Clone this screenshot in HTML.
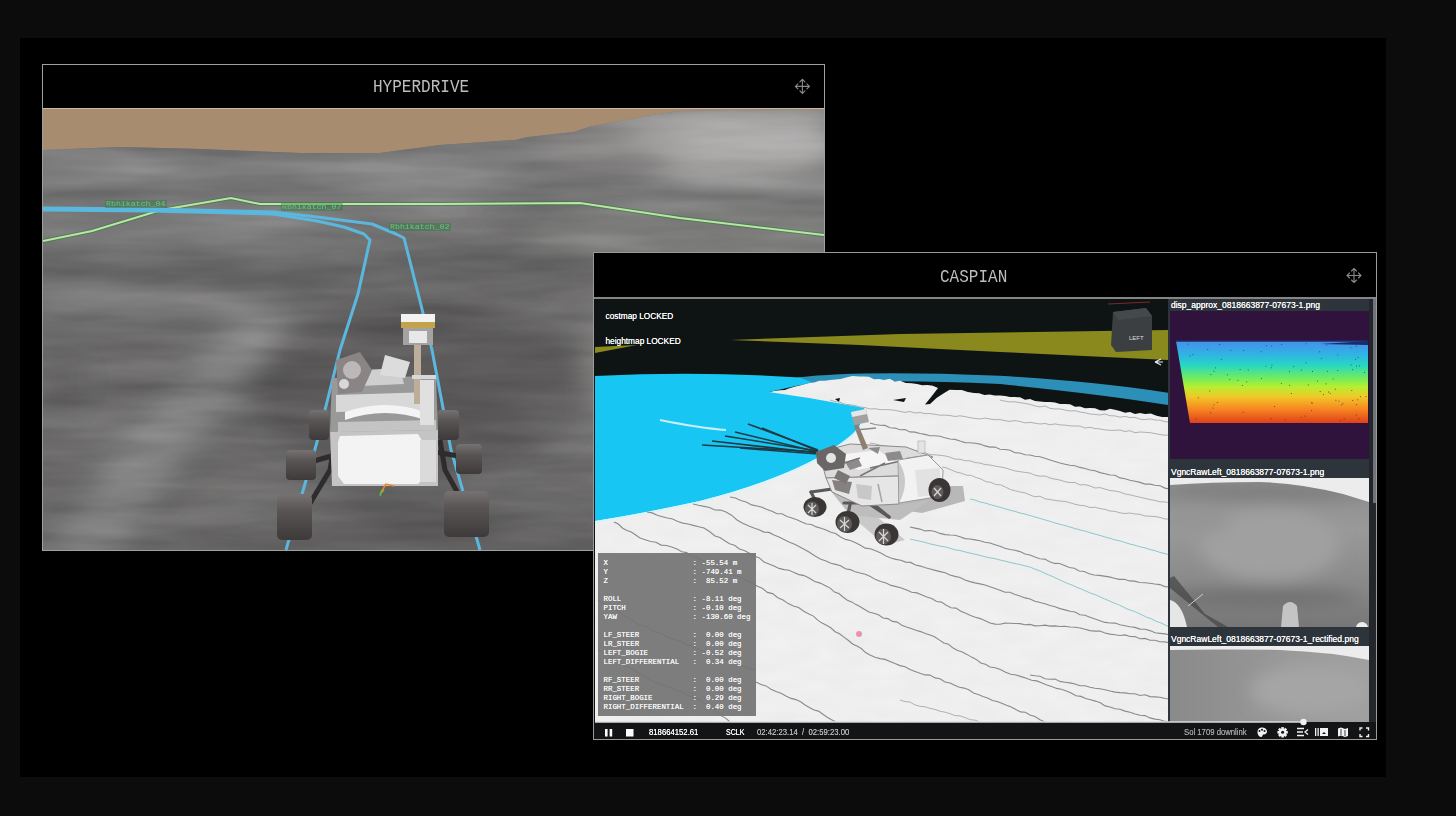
<!DOCTYPE html>
<html><head><meta charset="utf-8">
<style>
html,body{margin:0;padding:0}
body{width:1456px;height:816px;background:#0c0c0c;overflow:hidden;position:relative;font-family:"Liberation Sans",sans-serif}
.abs{position:absolute}
svg{position:absolute;left:0;top:0}
.title{position:absolute;font-family:"Liberation Mono",monospace;font-size:18px;color:#bdbdbd;line-height:18px;transform:scaleX(0.89);transform-origin:0 0;white-space:nowrap}
.mono{font-family:"Liberation Mono",monospace}
.glbl{font-size:8px;line-height:8px;height:8px;padding:0 1px;color:#67c57e;background:rgba(40,120,60,0.4);transform:scaleX(1.03);transform-origin:0 0;white-space:nowrap}
.lbl{font-size:8.5px;line-height:10px;color:#fff;text-shadow:0 0 0.3px #fff;white-space:nowrap}
.tb{top:727px;font-size:8.9px;line-height:10px;transform:scaleX(0.87);transform-origin:0 0;white-space:nowrap;text-shadow:0 0 0.3px currentColor}
</style></head>
<body>
<div class="abs" style="left:20px;top:38px;width:1366px;height:739px;background:#000"></div>

<!-- WINDOW 1 -->
<svg width="1456" height="816" viewBox="0 0 1456 816">
  <defs>
    <linearGradient id="terr1" x1="0" y1="0" x2="0" y2="1">
      <stop offset="0" stop-color="#7d7b7a"/>
      <stop offset="0.15" stop-color="#8a8988"/>
      <stop offset="0.35" stop-color="#6f6e6e"/>
      <stop offset="0.7" stop-color="#5e5d5d"/>
      <stop offset="1" stop-color="#626161"/>
    </linearGradient>
    <filter id="blur8" x="-50%" y="-50%" width="200%" height="200%"><feGaussianBlur stdDeviation="8"/></filter>
    <filter id="blurT" x="-10%" y="-10%" width="120%" height="120%"><feGaussianBlur stdDeviation="14"/></filter>
    <filter id="streak" x="0" y="0" width="100%" height="100%" color-interpolation-filters="sRGB">
      <feTurbulence type="fractalNoise" baseFrequency="0.006 0.045" numOctaves="3" seed="4" result="n"/>
      <feColorMatrix in="n" type="matrix" values="1.6 0 0 0 -0.3  1.6 0 0 0 -0.3  1.6 0 0 0 -0.3  0 0 0 0 1"/>
    </filter>
    <filter id="blur3" x="-50%" y="-50%" width="200%" height="200%"><feGaussianBlur stdDeviation="3"/></filter>
    <clipPath id="c1"><rect x="43" y="109" width="781" height="441"/></clipPath>
    <clipPath id="t1"><path d="M43 150 L120 147 L200 149 L300 153 L380 153 L440 145 L515 140 L528 137 L574 132 L590 126.5 L627 120 L654 114.5 L681 111 L735 110 L788 109.5 L824 110 L824 550 L43 550 Z"/></clipPath>
  </defs>
  <rect x="42.5" y="64.5" width="782" height="486" fill="#000" stroke="#a0a0a0" stroke-width="1"/>
  <g clip-path="url(#c1)">
    <rect x="43" y="108" width="781" height="442" fill="#a78c6f"/>
    <!-- base terrain -->
    <path d="M43 150 L120 147 L200 149 L300 153 L380 153 L440 145 L515 140 L528 137 L574 132 L590 126.5 L627 120 L654 114.5 L681 111 L735 110 L788 109.5 L824 110 L824 550 L43 550 Z" fill="#777676"/>
    <g clip-path="url(#t1)">
    <g filter="url(#blurT)">
      <rect x="0" y="100" width="900" height="460" fill="#6c6b6b"/>
      <!-- horizon band -->
      <path d="M20 150 L300 156 L440 148 L580 134 L706 104 L860 104 L860 200 L600 198 L300 195 L20 195 Z" fill="#818080"/>
      <!-- mountain highlight -->
      <ellipse cx="740" cy="150" rx="100" ry="30" fill="#a3a2a1"/>
      <path d="M540 142 L627 124 L681 114 L824 112 L824 140 L740 150 L650 150 L560 152 Z" fill="#adacab"/>
      <ellipse cx="610" cy="150" rx="70" ry="14" fill="#949392"/>
      <!-- mid band -->
      <ellipse cx="250" cy="228" rx="260" ry="25" fill="#7a7979"/>
      <ellipse cx="700" cy="235" rx="180" ry="28" fill="#7c7b7a"/>
      <!-- dark band -->
      <ellipse cx="280" cy="268" rx="300" ry="12" fill="#5f5f5f"/>
      <!-- left light streak -->
      <ellipse cx="150" cy="300" rx="140" ry="14" fill="#7e7d7d"/>
      <!-- middle dark -->
      <ellipse cx="420" cy="390" rx="170" ry="90" fill="#5b5a5a"/>
      <!-- lower left light diagonal -->
      <path d="M40 560 L120 450 L200 360 L240 320 L290 320 L230 400 L160 490 L110 560 Z" fill="#838282"/>
      <ellipse cx="60" cy="380" rx="30" ry="40" fill="#626161"/>
      <!-- right light -->
      <ellipse cx="720" cy="360" rx="140" ry="85" fill="#828180"/>
      <!-- bottom mid -->
      <ellipse cx="400" cy="540" rx="220" ry="40" fill="#626161"/>
      <ellipse cx="720" cy="520" rx="130" ry="50" fill="#6a6969"/>
    </g>
    <rect x="43" y="108" width="781" height="442" filter="url(#streak)" opacity="0.13" style="mix-blend-mode:overlay"/>
    </g>
    <!-- path lines -->
    <path d="M43 241 L92 231 L161 210 L231 198 L260 204 L440 204 L580 203 L680 218 L824 235" fill="none" stroke="#2f7a3a" stroke-width="4" opacity="0.55"/>
    <path d="M43 241 L92 231 L161 210 L231 198 L260 204 L440 204 L580 203 L680 218 L824 235" fill="none" stroke="#b9e6a4" stroke-width="2"/>
    <path d="M43 210 L150 211 L273 214 L317 221 L344 227 L364 234 L370 240 L358 294 L340 350 L317 442 L286 550" fill="none" stroke="#5ab8de" stroke-width="3" stroke-linejoin="round"/>
    <path d="M43 208 L150 209 L273 212 L317 217 L372 224 L396 234 L404 238 L421 305 L432 350 L451 450 L480 550" fill="none" stroke="#5ab8de" stroke-width="3" stroke-linejoin="round"/>

    <!-- rover 1 -->
    <g id="rover1">
      <defs>
        <linearGradient id="wh" x1="0" y1="0" x2="0" y2="1">
          <stop offset="0" stop-color="#777272"/><stop offset="0.35" stop-color="#5a5555"/><stop offset="1" stop-color="#3e3a3a"/>
        </linearGradient>
      </defs>
      <!-- far wheels -->
      <rect x="309" y="410" width="20" height="30" rx="4" fill="url(#wh)"/>
      <rect x="437" y="410" width="22" height="30" rx="4" fill="url(#wh)"/>
      <!-- suspension -->
      <path d="M300 520 L330 470 L335 440 M470 515 L445 470 L440 440 M300 465 L335 455 M470 458 L435 452" stroke="#2e2c2c" stroke-width="5" fill="none"/>
      <!-- deck -->
      <path d="M332 378 L436 376 L438 432 L330 432 Z" fill="#9a9999"/>
      <path d="M336 395 L432 392 L434 410 L336 412 Z" fill="#d8d8d8"/>
      <path d="M345 412 Q385 398 425 412 L425 420 Q385 406 345 420 Z" fill="#f4f4f4"/>
      <path d="M338 422 L436 420 L436 430 L338 432 Z" fill="#c4c4c4"/>
      <path d="M364 370 L400 368 L404 384 L360 386 Z" fill="#cfcfcf"/>
      <path d="M385 355 L410 362 L405 378 L380 375 Z" fill="#dcdcdc"/>
      <!-- arm turret -->
      <path d="M336 360 L360 352 L372 370 L362 392 L338 394 Z" fill="#8a8584"/>
      <circle cx="352" cy="370" r="9" fill="#bab8b8"/>
      <circle cx="344" cy="384" r="5" fill="#d8d8d8"/>
      <!-- mast -->
      <rect x="414" y="340" width="7" height="64" fill="#bcae98"/>
      <rect x="412" y="375" width="24" height="4" fill="#d8d8d8"/>
      <rect x="420" y="380" width="14" height="45" fill="#e0e0e0"/>
      <!-- mast head -->
      <rect x="401" y="314" width="34" height="12" fill="#f2f2f0"/>
      <rect x="401" y="322" width="34" height="6" fill="#c2a24a"/>
      <rect x="403" y="328" width="30" height="17" fill="#a5a3a1"/>
      <rect x="409" y="331" width="18" height="12" fill="#e8e8e8"/>
      <!-- front box -->
      <path d="M330 432 L438 430 L438 486 L332 486 Z" fill="#c4c4c4"/>
      <path d="M340 436 L418 434 L424 444 L424 478 L418 484 L344 484 L338 476 L338 442 Z" fill="#f3f3f3"/>
      <rect x="420" y="440" width="16" height="42" fill="#dadada"/>
      <!-- front wheels -->
      <rect x="286" y="450" width="30" height="30" rx="4" fill="url(#wh)"/>
      <rect x="456" y="444" width="26" height="30" rx="4" fill="url(#wh)"/>
      <!-- rear wheels -->
      <rect x="277" y="494" width="35" height="46" rx="5" fill="url(#wh)"/>
      <rect x="444" y="491" width="45" height="46" rx="5" fill="url(#wh)"/>
      <path d="M380 494 L386 484 L394 486 M384 490 L380 494" stroke="#e28a2c" stroke-width="1.5" fill="none"/>
      <path d="M382 490 L380 496" stroke="#4ec04e" stroke-width="1.5"/>
    </g>
  </g>
  <line x1="43" y1="108.5" x2="824" y2="108.5" stroke="#c8b8a4" stroke-width="1"/>
  <g transform="translate(802.4 86.4)" stroke="#8a8a8a" stroke-width="1.1" fill="none" stroke-linecap="round">
    <path d="M0 -7 L0 7 M-7 0 L7 0 M-2.5 -4.5 L0 -7 L2.5 -4.5 M-2.5 4.5 L0 7 L2.5 4.5 M-4.5 -2.5 L-7 0 L-4.5 2.5 M4.5 -2.5 L7 0 L4.5 2.5"/>
  </g>
</svg>
<div class="title" style="left:373px;top:78.3px">HYPERDRIVE</div>
<div class="abs mono glbl" style="left:104.5px;top:199.5px">Rbhikatch_04</div>
<div class="abs mono glbl" style="left:280.5px;top:202.5px">Rbhikatch_07</div>
<div class="abs mono glbl" style="left:388.5px;top:222.5px">Rbhikatch_02</div>


<!-- WINDOW 2 -->
<svg width="1456" height="816" viewBox="0 0 1456 816">
  <defs>
    <filter id="bumps" x="0" y="0" width="100%" height="100%" color-interpolation-filters="sRGB">
      <feTurbulence type="fractalNoise" baseFrequency="0.03 0.08" numOctaves="2" seed="9" result="n"/>
      <feColorMatrix in="n" type="matrix" values="1.4 0 0 0 -0.2  1.4 0 0 0 -0.2  1.4 0 0 0 -0.2  0 0 0 0 1"/>
    </filter>
    <clipPath id="tclip"><path d="M769.0 392.0 L774.2 390.9 L779.5 390.2 L784.8 390.1 L790.0 388.0 L796.3 386.2 L802.7 384.7 L809.0 383.0 L814.2 382.5 L819.5 380.7 L824.8 380.8 L830.0 380.0 L835.3 379.5 L840.7 379.0 L846.0 377.4 L852.5 375.9 L859.0 376.5 L864.0 376.6 L869.0 376.7 L874.0 379.2 L879.0 379.0 L884.2 379.9 L889.5 378.7 L894.8 381.5 L900.0 380.7 L905.7 383.0 L911.3 383.3 L917.0 384.0 L922.2 385.3 L927.5 385.1 L932.8 385.7 L938.0 388.0 L931.5 396.4 L925.0 404.6 L930.0 404.0 L936.5 398.1 L943.0 393.7 L949.5 389.7 L955.6 389.9 L961.8 390.1 L967.9 392.1 L974.0 393.0 L979.2 393.3 L984.4 394.9 L989.6 394.5 L994.8 395.4 L1000.0 395.5 L1005.0 396.1 L1010.0 397.1 L1015.0 397.1 L1020.0 397.3 L1025.0 399.7 L1030.0 399.0 L1035.0 401.1 L1040.0 401.6 L1045.0 402.0 L1050.0 401.9 L1055.0 402.5 L1060.0 404.0 L1065.0 404.1 L1070.0 404.2 L1075.0 406.7 L1080.0 406.4 L1085.0 408.2 L1090.0 408.0 L1095.0 408.2 L1100.0 410.2 L1105.0 410.4 L1110.0 408.7 L1115.0 409.7 L1120.0 411.0 L1125.0 412.7 L1130.0 412.1 L1135.0 414.0 L1140.0 413.1 L1145.0 414.0 L1150.8 413.6 L1156.5 415.8 L1162.2 417.0 L1168.0 417.0 L1168 722 L595 722 L595 395 Z"/></clipPath>
    <clipPath id="c2"><rect x="594" y="299" width="575" height="423"/></clipPath>
  </defs>
  <rect x="593.5" y="252.5" width="783" height="487" fill="#000" stroke="#9a9a9a" stroke-width="1"/>
  <line x1="594" y1="298" x2="1376" y2="298" stroke="#858585" stroke-width="2"/>
  <g transform="translate(1354 275.5)" stroke="#8a8a8a" stroke-width="1.1" fill="none" stroke-linecap="round">
    <path d="M0 -7 L0 7 M-7 0 L7 0 M-2.5 -4.5 L0 -7 L2.5 -4.5 M-2.5 4.5 L0 7 L2.5 4.5 M-4.5 -2.5 L-7 0 L-4.5 2.5 M4.5 -2.5 L7 0 L4.5 2.5"/>
  </g>
  <g clip-path="url(#c2)">
    <rect x="594" y="299" width="575" height="423" fill="#0e1314"/>
    <!-- yellow wedges -->
    <path d="M730 340 L900 334 L1168 330 L1168 360 L1000 352 L860 345 Z" fill="#8a891d"/>
    <path d="M595 347 L637 345 L595 353 Z" fill="#8a891d"/>
    <!-- blue band -->
    <path d="M798 377.4 Q860 370 1000 375.7 Q1100 382 1168 392.7 L1168 405 Q1100 394 1000 384 Q875 378 800 385 Z" fill="#2b8fb8"/>
    <!-- white terrain -->
    <path d="M769.0 392.0 L774.2 390.9 L779.5 390.2 L784.8 390.1 L790.0 388.0 L796.3 386.2 L802.7 384.7 L809.0 383.0 L814.2 382.5 L819.5 380.7 L824.8 380.8 L830.0 380.0 L835.3 379.5 L840.7 379.0 L846.0 377.4 L852.5 375.9 L859.0 376.5 L864.0 376.6 L869.0 376.7 L874.0 379.2 L879.0 379.0 L884.2 379.9 L889.5 378.7 L894.8 381.5 L900.0 380.7 L905.7 383.0 L911.3 383.3 L917.0 384.0 L922.2 385.3 L927.5 385.1 L932.8 385.7 L938.0 388.0 L931.5 396.4 L925.0 404.6 L930.0 404.0 L936.5 398.1 L943.0 393.7 L949.5 389.7 L955.6 389.9 L961.8 390.1 L967.9 392.1 L974.0 393.0 L979.2 393.3 L984.4 394.9 L989.6 394.5 L994.8 395.4 L1000.0 395.5 L1005.0 396.1 L1010.0 397.1 L1015.0 397.1 L1020.0 397.3 L1025.0 399.7 L1030.0 399.0 L1035.0 401.1 L1040.0 401.6 L1045.0 402.0 L1050.0 401.9 L1055.0 402.5 L1060.0 404.0 L1065.0 404.1 L1070.0 404.2 L1075.0 406.7 L1080.0 406.4 L1085.0 408.2 L1090.0 408.0 L1095.0 408.2 L1100.0 410.2 L1105.0 410.4 L1110.0 408.7 L1115.0 409.7 L1120.0 411.0 L1125.0 412.7 L1130.0 412.1 L1135.0 414.0 L1140.0 413.1 L1145.0 414.0 L1150.8 413.6 L1156.5 415.8 L1162.2 417.0 L1168.0 417.0 L1168 722 L595 722 L595 395 Z" fill="#efefef"/>
    <rect x="595" y="370" width="574" height="352" filter="url(#bumps)" clip-path="url(#tclip)" opacity="0.16" style="mix-blend-mode:overlay"/>
    <path d="M835 399 L840 398 L839 402 Z M893 400 L906 398 L904 402 Z M836 406 L841 405 L840 408 Z" fill="#0e1314"/>
    <!-- cyan blob -->
    <path d="M595 376 Q700 371 800 377.5 L812 382.5 L769 392 L809 398 L865 408 Q866 425 845 440 Q800 475 700 501 Q640 514 595 521 Z" fill="#17c6f2"/>
    <path d="M660 420 Q700 428 726 430" stroke="#c8eef8" stroke-width="2" fill="none"/>
    <path d="M595 522 Q640 515 700 502 Q800 476 846 441 Q867 425 865 408" stroke="#d8f4fb" stroke-width="2" fill="none"/>
    
    
    <g class="contours"><path d="M647.0 512.0 L652.1 512.9 L657.2 515.3 L662.4 516.7 L667.5 518.0 L672.6 519.0 L677.8 521.5 L682.9 523.1 L688.0 524.0 L693.3 525.4 L698.7 526.7 L704.0 528.0 L709.5 531.5 L715.0 536.0 L719.9 537.6 L724.8 540.8 L729.6 543.7 L734.5 545.2 L739.4 549.0 L744.2 550.5 L749.1 553.0 L754.0 556.0 L759.0 557.7 L764.0 561.9 L769.0 563.9 L774.0 566.0 L779.0 568.4 L784.0 569.6 L789.0 570.3 L794.0 572.5 L799.0 574.6 L804.0 575.6 L809.0 578.0 L814.7 581.5 L820.3 583.1 L826.0 586.0 L830.2 588.1 L834.5 592.1 L838.8 593.6 L843.0 597.0 L847.3 600.3 L851.7 601.9 L856.0 604.6 L860.3 606.7 L864.7 609.5 L869.0 612.0 L873.7 613.2 L878.4 614.7 L883.1 618.0 L887.8 618.6 L892.5 621.4 L897.2 622.1 L901.8 625.2 L906.5 626.9 L911.2 628.4 L915.9 630.2 L920.6 631.6 L925.3 633.6 L930.0 635.0 L934.6 636.8 L939.2 639.9 L943.8 643.0 L948.5 644.3 L953.1 648.1 L957.7 650.5 L962.3 652.1 L966.9 654.4 L971.5 657.1 L976.2 659.4 L980.8 663.0 L985.4 664.3 L990.0 667.0 L995.2 667.7 L1000.4 669.5 L1005.6 672.2 L1010.8 674.3 L1016.0 675.0 L1021.2 676.6 L1026.4 678.3 L1031.6 680.2 L1036.8 680.9 L1042.0 683.0 L1046.9 684.9 L1051.7 686.5 L1056.6 688.4 L1061.4 689.3 L1066.3 691.0 L1071.1 693.0 L1076.0 695.8 L1080.9 696.4 L1085.7 698.6 L1090.6 699.8 L1095.4 701.1 L1100.3 702.8 L1105.1 705.9 L1110.0 707.0 L1115.0 708.7 L1120.0 709.3 L1125.0 711.1 L1130.0 712.3 L1135.0 714.0 L1140.0 715.3 L1145.0 715.6 L1150.0 717.9 L1155.0 719.1 L1160.0 719.7 L1165.0 721.4 L1170.0 722.0" fill="none" stroke="#888a8c" stroke-width="1.1"/>
<path d="M693.0 504.0 L698.5 505.3 L704.0 506.4 L709.5 507.5 L715.0 510.0 L720.5 510.1 L726.0 512.0 L731.5 515.2 L737.0 520.0 L742.7 523.2 L748.3 525.8 L754.0 528.0 L759.0 529.7 L764.0 532.1 L769.0 532.4 L774.0 535.0 L779.0 537.0 L784.0 539.5 L789.0 542.1 L794.0 544.1 L799.0 546.4 L804.0 549.3 L809.0 552.0 L814.7 555.7 L820.3 558.9 L826.0 561.0 L830.9 563.2 L835.7 564.4 L840.6 565.7 L845.4 568.7 L850.3 569.6 L855.1 571.7 L860.0 573.0 L865.2 574.2 L870.4 576.5 L875.6 579.6 L880.8 581.5 L886.0 583.0 L891.1 585.4 L896.3 586.6 L901.4 588.0 L906.6 590.0 L911.7 592.2 L916.9 592.9 L922.0 595.0 L926.9 597.1 L931.7 598.6 L936.6 601.5 L941.4 602.1 L946.3 605.3 L951.1 607.8 L956.0 608.1 L960.9 611.2 L965.7 613.3 L970.6 615.6 L975.4 617.2 L980.3 618.6 L985.1 620.8 L990.0 623.0 L995.0 624.1 L1000.0 624.2 L1005.0 623.1 L1010.0 623.3 L1015.0 623.5 L1020.0 623.6 L1025.0 624.7 L1030.0 624.4 L1035.0 625.9 L1040.0 625.8 L1045.0 625.1 L1050.0 626.1 L1055.0 625.9 L1060.0 626.5 L1065.0 626.2 L1070.0 627.0 L1075.0 627.2 L1080.0 628.0 L1085.0 629.2 L1090.0 630.6 L1095.0 631.1 L1100.0 631.0 L1105.0 633.0 L1110.0 634.1 L1115.0 634.7 L1120.0 635.5 L1125.0 634.9 L1130.0 636.5 L1135.0 636.6 L1140.0 638.7 L1145.0 638.4 L1150.0 640.2 L1155.0 640.2 L1160.0 641.8 L1165.0 641.9 L1170.0 643.0" fill="none" stroke="#888a8c" stroke-width="1.1"/>
<path d="M730.0 497.0 L735.4 498.0 L740.8 500.4 L746.2 502.1 L751.6 504.9 L757.0 506.0 L762.0 507.3 L767.0 509.4 L772.0 511.2 L777.0 513.7 L782.0 513.8 L787.0 516.5 L792.0 518.0 L796.9 519.7 L801.7 521.9 L806.6 524.0 L811.4 524.5 L816.3 526.9 L821.1 528.3 L826.0 530.0 L830.9 532.3 L835.7 533.5 L840.6 537.0 L845.4 539.4 L850.3 540.5 L855.1 542.5 L860.0 545.0 L865.2 548.1 L870.4 548.7 L875.6 550.8 L880.8 553.0 L886.0 556.0 L890.9 558.0 L895.8 559.4 L900.8 560.3 L905.7 562.1 L910.6 562.4 L915.5 565.0 L920.5 566.1 L925.4 567.7 L930.3 569.0 L935.2 570.4 L940.2 571.6 L945.1 572.7 L950.0 575.0 L955.0 576.4 L960.0 577.5 L965.0 579.9 L970.0 581.6 L975.0 582.9 L980.0 583.9 L985.0 585.0 L990.0 586.8 L995.0 588.5 L1000.0 590.2 L1005.0 592.3 L1010.0 592.3 L1015.0 594.5 L1020.0 596.0 L1025.0 597.9 L1030.0 599.0 L1035.0 601.2 L1040.0 602.5 L1045.0 603.7 L1050.0 605.5 L1055.0 606.8 L1060.0 608.6 L1065.0 609.9 L1070.0 611.3 L1075.0 612.0 L1080.0 614.8 L1085.0 615.3 L1090.0 617.2 L1095.0 619.1 L1100.0 620.8 L1105.0 622.4 L1110.0 623.0 L1115.0 623.1 L1120.0 624.7 L1125.0 625.7 L1130.0 626.8 L1135.0 627.4 L1140.0 629.1 L1145.0 629.2 L1150.0 630.6 L1155.0 632.8 L1160.0 633.4 L1165.0 633.9 L1170.0 635.0" fill="none" stroke="#888a8c" stroke-width="1.1"/>
<path d="M614.0 522.0 L618.3 524.0 L622.7 528.2 L627.0 530.4 L631.3 532.1 L635.7 535.0 L640.0 538.0 L645.3 539.8 L650.6 541.5 L655.9 542.3 L661.1 545.1 L666.4 545.5 L671.7 547.0 L677.0 549.0 L681.8 551.7 L686.6 552.6 L691.3 555.7 L696.1 556.9 L700.9 559.7 L705.7 561.3 L710.4 563.6 L715.2 566.7 L720.0 568.0 L724.6 570.2 L729.2 572.4 L733.9 575.0 L738.5 576.6 L743.1 578.7 L747.8 581.3 L752.4 583.3 L757.0 586.0 L762.2 588.2 L767.4 592.4 L772.6 593.6 L777.8 597.8 L783.0 600.0 L788.2 603.6 L793.4 606.0 L798.6 607.5 L803.8 611.2 L809.0 614.0 L813.4 616.1 L817.7 620.1 L822.1 623.1 L826.4 625.2 L830.8 627.8 L835.1 631.7 L839.5 633.8 L843.9 637.1 L848.2 640.3 L852.6 644.0 L856.9 646.0 L861.3 648.5 L865.6 652.6 L870.0 655.0 L875.0 657.3 L880.0 658.6 L885.0 659.4 L890.0 661.4 L895.0 663.6 L900.0 665.6 L905.0 666.8 L910.0 669.5 L915.0 671.4 L920.0 673.3 L925.0 674.9 L930.0 675.1 L935.0 677.9 L940.0 678.7 L945.0 682.0 L950.0 683.0 L954.7 685.3 L959.4 687.2 L964.1 688.1 L968.8 689.7 L973.5 693.0 L978.2 694.5 L982.9 696.4 L987.6 698.0 L992.4 700.5 L997.1 701.5 L1001.8 703.3 L1006.5 705.3 L1011.2 707.1 L1015.9 709.6 L1020.6 711.9 L1025.3 712.3 L1030.0 715.0 L1035.0 716.6 L1040.0 719.7 L1045.0 722.0" fill="none" stroke="#888a8c" stroke-width="1.1"/>
<path d="M598.0 600.0 L602.7 603.1 L607.3 605.0 L612.0 607.9 L616.7 610.3 L621.3 613.1 L626.0 616.7 L630.7 619.8 L635.3 622.5 L640.0 625.0 L644.6 626.3 L649.2 628.1 L653.8 631.5 L658.5 632.8 L663.1 634.5 L667.7 636.9 L672.3 638.9 L676.9 640.4 L681.5 641.5 L686.2 644.8 L690.8 645.6 L695.4 647.2 L700.0 650.0 L705.1 651.6 L710.2 653.7 L715.3 655.7 L720.4 656.7 L725.5 659.5 L730.5 660.9 L735.6 662.1 L740.7 665.2 L745.8 666.9 L750.9 668.9 L756.0 670.0" fill="none" stroke="#888a8c" stroke-width="1.1"/>
<path d="M756.0 682.0 L761.0 684.5 L766.0 685.9 L771.0 689.2 L776.0 691.6 L781.0 693.2 L786.0 696.1 L791.0 698.4 L796.0 699.6 L801.0 702.0 L805.4 705.3 L809.8 707.8 L814.1 710.0 L818.5 711.1 L822.9 714.2 L827.2 717.2 L831.6 719.7 L836.0 722.0" fill="none" stroke="#888a8c" stroke-width="1.1"/>
<path d="M870.0 423.0 L875.0 424.5 L880.0 425.3 L885.0 425.4 L890.0 427.8 L895.0 428.1 L900.0 429.7 L905.0 429.5 L910.0 431.9 L915.0 432.1 L920.0 433.5 L925.0 434.4 L930.0 435.7 L935.0 435.8 L940.0 436.2 L945.0 437.8 L950.0 439.0 L955.0 439.4 L960.0 441.1 L965.0 442.6 L970.0 442.8 L975.0 443.3 L980.0 444.1 L985.0 445.9 L990.0 447.1 L995.0 447.1 L1000.0 449.3 L1005.0 449.5 L1010.0 450.3 L1015.0 452.8 L1020.0 453.0 L1025.0 454.7 L1030.0 455.0 L1035.0 456.3 L1040.0 456.8 L1045.0 458.3 L1050.0 459.9 L1055.0 461.5 L1060.0 463.0 L1065.0 464.2 L1070.0 465.3 L1075.0 465.8 L1080.0 467.4 L1085.0 468.5 L1090.0 470.0 L1095.0 470.8 L1100.0 472.6 L1105.0 473.7 L1110.0 475.0 L1115.0 475.3 L1120.0 477.9 L1125.0 478.7 L1130.0 480.2 L1135.0 481.3 L1140.0 482.4 L1145.0 484.1 L1150.0 484.1 L1155.0 485.3 L1160.0 485.8 L1165.0 488.1 L1170.0 489.0" fill="none" stroke="#888a8c" stroke-width="1.1"/>
<path d="M910.0 527.0 L915.0 528.1 L920.0 529.1 L925.0 530.9 L930.0 530.5 L935.0 531.5 L940.0 533.4 L945.0 534.6 L950.0 535.0 L955.0 535.2 L960.0 536.8 L965.0 538.6 L970.0 539.0 L975.0 539.9 L980.0 540.8 L985.0 542.2 L990.0 543.0 L995.0 544.7 L1000.0 546.3 L1005.0 548.2 L1010.0 549.5 L1015.0 550.3 L1020.0 551.6 L1025.0 554.0 L1030.0 555.0 L1034.9 557.1 L1039.8 558.8 L1044.8 559.1 L1049.7 561.8 L1054.6 563.4 L1059.5 563.5 L1064.5 565.4 L1069.4 567.5 L1074.3 568.2 L1079.2 571.0 L1084.2 571.5 L1089.1 573.8 L1094.0 575.0 L1099.1 575.4 L1104.1 576.1 L1109.2 576.9 L1114.3 578.2 L1119.3 579.4 L1124.4 579.3 L1129.5 580.9 L1134.5 581.1 L1139.6 582.5 L1144.7 582.8 L1149.7 583.2 L1154.8 584.0 L1159.9 584.6 L1164.9 586.6 L1170.0 587.0" fill="none" stroke="#888a8c" stroke-width="1.1"/>
<path d="M1030.0 675.0 L1035.0 675.8 L1040.0 676.3 L1045.0 678.7 L1050.0 679.3 L1055.0 679.1 L1060.0 681.4 L1065.0 682.2 L1070.0 682.9 L1075.0 684.0 L1080.0 685.8 L1085.0 685.8 L1090.0 687.2 L1095.0 688.2 L1100.0 688.8 L1105.0 689.7 L1110.0 691.0 L1115.0 692.1 L1120.0 692.6 L1125.0 692.9 L1130.0 693.7 L1135.0 693.8 L1140.0 695.5 L1145.0 694.8 L1150.0 696.6 L1155.0 696.9 L1160.0 697.2 L1165.0 698.5 L1170.0 699.0" fill="none" stroke="#888a8c" stroke-width="1.1"/>
<path d="M598.0 650.0 L602.3 652.6 L606.7 654.3 L611.0 657.5 L615.3 659.4 L619.7 663.0 L624.0 664.7 L628.3 667.2 L632.7 669.5 L637.0 671.7 L641.3 674.4 L645.7 676.9 L650.0 680.0 L655.0 682.2 L660.0 684.6 L665.0 685.5 L670.0 687.3 L675.0 690.1 L680.0 691.3 L685.0 693.8 L690.0 696.5 L695.0 697.5 L700.0 700.0 L704.3 703.5 L708.6 706.4 L712.9 708.7 L717.1 712.1 L721.4 715.9 L725.7 718.1 L730.0 722.0" fill="none" stroke="#888a8c" stroke-width="1.1"/><path d="M942.0 467.0 L946.9 468.0 L951.8 470.2 L956.7 472.2 L961.6 473.3 L966.4 475.1 L971.3 475.4 L976.2 477.5 L981.1 479.1 L986.0 481.7 L990.9 482.3 L995.8 484.6 L1000.7 484.8 L1005.6 487.2 L1010.4 489.5 L1015.3 490.8 L1020.2 492.0 L1025.1 492.9 L1030.0 495.0 L1035.0 496.8 L1040.0 496.2 L1045.0 498.8 L1050.0 499.5 L1055.0 500.4 L1060.0 501.1 L1065.0 501.4 L1070.0 502.7 L1075.0 504.3 L1080.0 505.3 L1085.0 505.8 L1090.0 507.5 L1095.0 507.2 L1100.0 508.6 L1105.0 509.3 L1110.0 511.0 L1115.0 511.4 L1120.0 512.9 L1125.0 513.5 L1130.0 513.0 L1135.0 514.0 L1140.0 514.3 L1145.0 516.0 L1150.0 516.2 L1155.0 516.5 L1160.0 517.4 L1165.0 519.0 L1170.0 519.0" fill="none" stroke="#aeb0b2" stroke-width="1"/>
<path d="M870.0 443.0 L875.0 443.8 L880.0 445.2 L885.0 446.0 L890.0 446.6 L895.0 447.7 L900.0 448.3 L905.0 448.9 L910.0 450.3 L915.0 450.9 L920.0 451.9 L925.0 452.5 L930.0 454.7 L935.0 454.8 L940.0 455.3 L945.0 455.9 L950.0 457.2 L955.0 459.2 L960.0 459.2 L965.0 460.7 L970.0 460.8 L975.0 462.5 L980.0 463.1 L985.0 464.5 L990.0 465.0 L995.0 466.1 L1000.0 466.9 L1005.0 467.8 L1010.0 469.4 L1015.0 470.9 L1020.0 471.7 L1025.0 472.4 L1030.0 473.1 L1035.0 475.2 L1040.0 476.2 L1045.0 476.0 L1050.0 478.0 L1055.0 479.2 L1060.0 480.1 L1065.0 481.7 L1070.0 482.6 L1075.0 482.5 L1080.0 484.9 L1085.0 484.7 L1090.0 485.9 L1095.0 488.0 L1100.0 487.6 L1105.0 489.1 L1110.0 490.6 L1115.0 491.0 L1120.0 492.0 L1125.0 494.0 L1130.0 494.8 L1135.0 496.1 L1140.0 497.2 L1145.0 498.4 L1150.0 499.5 L1155.0 500.4 L1160.0 501.8 L1165.0 501.9 L1170.0 503.0" fill="none" stroke="#aeb0b2" stroke-width="1"/>
<path d="M830.0 400.0 L835.0 401.5 L840.0 402.3 L845.0 404.2 L850.0 404.8 L855.0 405.5 L860.0 407.0 L865.0 407.5 L870.0 409.0 L875.0 408.7 L880.0 409.6 L885.0 409.6 L890.0 409.8 L895.0 410.3 L900.0 411.4 L905.0 412.4 L910.0 411.5 L915.0 413.0 L920.0 412.5 L925.0 413.6 L930.0 413.6 L935.0 414.3 L940.0 415.2 L945.0 415.1 L950.0 415.5 L955.0 416.5 L960.0 415.8 L965.0 416.6 L970.0 417.7 L975.0 418.4 L980.0 419.0 L985.0 418.1 L990.0 419.0 L995.0 419.7 L1000.0 419.6 L1005.0 420.7 L1010.0 421.4 L1015.0 420.6 L1020.0 421.4 L1025.0 422.9 L1030.0 422.3 L1035.0 423.2 L1040.0 424.0 L1045.0 423.5 L1050.0 424.8 L1055.0 423.9 L1060.0 424.9 L1065.0 425.1 L1070.0 425.8 L1075.0 426.0 L1080.0 426.1 L1085.0 428.0 L1090.0 427.3 L1095.0 428.5 L1100.0 428.9 L1105.0 429.9 L1110.0 430.3 L1115.0 430.3 L1120.0 430.0 L1125.0 431.5 L1130.0 430.7 L1135.0 432.7 L1140.0 432.0 L1145.0 432.3 L1150.0 432.7 L1155.0 433.5 L1160.0 434.6 L1165.0 435.2 L1170.0 435.0" fill="none" stroke="#aeb0b2" stroke-width="1"/>
<path d="M1000.0 400.0 L1005.0 401.2 L1010.0 401.9 L1015.0 401.8 L1020.0 402.7 L1025.0 403.4 L1030.0 404.4 L1035.0 405.9 L1040.0 406.9 L1045.0 406.0 L1050.0 408.3 L1055.0 409.0 L1060.0 408.9 L1065.0 410.1 L1070.0 411.0 L1075.0 410.7 L1080.0 412.0 L1085.0 412.8 L1090.0 414.0 L1095.0 414.4 L1100.0 415.0 L1105.0 414.0 L1110.0 415.7 L1115.0 415.9 L1120.0 417.2 L1125.0 416.4 L1130.0 417.6 L1135.0 417.4 L1140.0 419.2 L1145.0 419.6 L1150.0 418.9 L1155.0 420.0 L1160.0 420.2 L1165.0 421.7 L1170.0 422.0" fill="none" stroke="#aeb0b2" stroke-width="1"/>
<path d="M900.0 700.0 L905.0 701.6 L910.0 702.0 L915.0 704.9 L920.0 706.3 L925.0 706.8 L930.0 708.4 L935.0 709.4 L940.0 711.2 L945.0 712.2 L950.0 713.6 L955.0 715.6 L960.0 715.9 L965.0 717.5 L970.0 719.7 L975.0 720.1 L980.0 722.0" fill="none" stroke="#aeb0b2" stroke-width="1"/><path d="M970.0 499.0 L975.0 500.1 L980.0 502.0 L985.0 503.0 L990.0 504.5 L995.0 505.9 L1000.0 507.3 L1005.0 508.7 L1010.0 510.2 L1015.0 511.4 L1020.0 513.0 L1025.0 514.1 L1030.0 515.5 L1035.0 517.0 L1040.0 518.4 L1045.0 519.9 L1050.0 521.3 L1055.0 523.0 L1060.0 524.3 L1065.0 525.6 L1070.0 527.0 L1075.0 528.6 L1080.0 529.9 L1085.0 531.1 L1090.0 532.7 L1095.0 534.1 L1100.0 535.4 L1105.0 537.0 L1110.0 538.3 L1115.0 539.9 L1120.0 540.9 L1125.0 542.5 L1130.0 544.1 L1135.0 545.2 L1140.0 546.8 L1145.0 547.8 L1150.0 549.5 L1155.0 550.7 L1160.0 552.4 L1165.0 553.6 L1170.0 555.0" fill="none" stroke="#8cc8cc" stroke-width="1"/>
<path d="M910.0 539.0 L915.0 540.2 L920.0 541.2 L925.0 542.4 L930.0 543.9 L935.0 544.9 L940.0 546.1 L945.0 546.9 L950.0 548.2 L955.0 549.8 L960.0 550.5 L965.0 551.9 L970.0 553.1 L975.0 554.2 L980.0 555.4 L985.0 556.8 L990.0 557.8 L995.0 558.7 L1000.0 560.0 L1005.0 561.1 L1010.0 562.4 L1015.0 563.6 L1020.0 564.5 L1025.0 565.9 L1030.0 567.0 L1034.7 569.0 L1039.3 570.7 L1044.0 572.9 L1048.7 574.9 L1053.3 576.8 L1058.0 579.1 L1062.7 581.3 L1067.3 583.3 L1072.0 585.1 L1076.7 587.2 L1081.3 589.0 L1086.0 591.1 L1090.7 593.2 L1095.3 594.7 L1100.0 596.9 L1104.7 598.9 L1109.3 600.9 L1114.0 603.0 L1118.7 604.7 L1123.3 607.1 L1128.0 609.3 L1132.7 610.8 L1137.3 612.8 L1142.0 614.9 L1146.7 617.2 L1151.3 618.8 L1156.0 621.2 L1160.7 622.8 L1165.3 625.1 L1170.0 627.0" fill="none" stroke="#8cc8cc" stroke-width="1"/></g>
    <!-- whiskers -->
    <g stroke="#1f3a44" stroke-width="1.6" fill="none">
      <path d="M818 452 L702 445"/><path d="M818 453 L712 441"/><path d="M818 451 L725 436"/>
      <path d="M818 450 L748 424"/><path d="M818 451 L762 428"/><path d="M818 454 L740 448"/>
      <path d="M818 452 L735 432"/>
    </g>
    <!-- rover 2 shadow -->
    <path d="M889 501 L906 486 L963 486 L965 501 L922 513 L895 509 Z" fill="#b8b8b8"/>
    <path d="M850 515 L885 545 L905 540 L875 515 Z" fill="#c9c9c9"/>
    <!-- rover2 -->
    <g>
      <!-- under-body shadow -->
      <path d="M830 490 L900 505 L930 500 L900 520 L850 515 Z" fill="#bdbdbd"/>
      <!-- suspension -->
      <g stroke="#5c5858" stroke-width="3.2" fill="none" stroke-linecap="round">
        <path d="M811 492 L847 487 L866 498 L889 517"/>
        <path d="M844 503 L868 503 L889 517"/>
        <path d="M815 500 L811 492"/>
        <path d="M847 518 L850 505"/>
        <path d="M900 500 L935 485"/>
      </g>
      <!-- deck / top -->
      <path d="M819 452 L850 444 L906 447 L933 457 L899 476 L826 478 Z" fill="#dcdcdc" stroke="#8d8989" stroke-width="1"/>
      <path d="M838 455 L878 450 L895 462 L858 470 Z" fill="#f5f5f5"/>
      <path d="M845 462 L858 458 L862 466 L850 470 Z M885 453 L900 451 L903 459 L888 461 Z M905 458 L925 455 L920 463 Z M868 448 L880 447 L878 454 Z" fill="#8f8b8b"/>
      <path d="M860 476 L885 463 M870 468 L905 460 M835 466 L860 458" stroke="#7a7676" stroke-width="1.5"/>
      <!-- body front face -->
      <path d="M826 478 L899 476 L899 504 L862 506 L832 492 Z" fill="#e6e6e6" stroke="#8d8989" stroke-width="1"/>
      <path d="M832 480 L852 482 L849 494 L835 490 Z" fill="#858181"/>
      <path d="M856 484 L872 486 L871 500 L858 498 Z" fill="#c8c8c8"/>
      <path d="M878 484 L882 502" stroke="#a5a5a5" stroke-width="1.5"/>
      <!-- RTG -->
      <path d="M898 460 L928 455 L943 470 L942 496 L899 503 Z" fill="#f2f2f2" stroke="#999" stroke-width="1"/>
      <path d="M899 462 Q911 481 899 503 Z" fill="#c9c9c9"/>
      <path d="M915 470 L940 468 L941 494 L918 497 Z" fill="#e2e2e2"/>
      <rect x="918" y="441" width="7" height="12" fill="#e4e4e4" stroke="#aaa" stroke-width="0.6"/>
      <!-- turret head -->
      <path d="M816 452 L834 445 L846 454 L844 468 L825 471 L817 463 Z" fill="#6a6666"/>
      <circle cx="831" cy="458" r="5" fill="#e4e4e4"/>
      <path d="M838 470 L850 476 L846 484 L834 478 Z" fill="#7a7676"/>
      <!-- mast -->
      <path d="M858 424 L868 448 L863 450 L854 426 Z" fill="#8d8070"/>
      <path d="M851 412 L866 409 L869 422 L854 425 Z" fill="#a4a0a0"/>
      <path d="M851 412 L866 409 L867 414 L852 417 Z" fill="#e6e6e6"/>
      <path d="M856 430 L876 428" stroke="#8d8989" stroke-width="1.5"/>
      <!-- wheels -->
      <g fill="#3a3636">
        <ellipse cx="815" cy="507" rx="11.5" ry="10"/><ellipse cx="847.5" cy="522" rx="12" ry="11"/><ellipse cx="886.5" cy="534.5" rx="12" ry="11"/><ellipse cx="939.5" cy="490" rx="11" ry="12"/>
      </g>
      <g fill="#5f5b5b">
        <ellipse cx="812" cy="509" rx="7" ry="7.5"/><ellipse cx="844.5" cy="524" rx="7.5" ry="8"/><ellipse cx="883.5" cy="536.5" rx="7.5" ry="8"/><ellipse cx="937.5" cy="492" rx="6" ry="7"/>
      </g>
      <g stroke="#d8d8d8" stroke-width="1.2">
        <path d="M808 505 L816 513 M816 505 L808 513 M812 503 L812 515"/>
        <path d="M840 520 L849 528 M849 520 L840 528 M844.5 517 L844.5 531"/>
        <path d="M879 532 L888 541 M888 532 L879 541 M883.5 529 L883.5 544"/>
        <path d="M934 488 L941 496 M941 488 L934 496"/>
      </g>
    </g>
    <!-- telemetry panel -->
    <rect x="598" y="553" width="158" height="163" fill="#747474" opacity="0.93"/>
    <!-- nav cube -->
    <path d="M1113 312 L1146 308 L1152 316 L1152 350 L1116 352 L1111 345 Z" fill="#3b3f42"/>
    <path d="M1113 312 L1146 308 L1152 316 L1118 320 Z" fill="#45494c"/>
    <path d="M1108 304 L1150 302" stroke="#7a2a2a" stroke-width="1"/>
    <path d="M1155 362 L1161 359 M1155 362 L1161 365 M1155 362 L1163 362" stroke="#e8e8e8" stroke-width="1.2"/>
    <!-- pink marker -->
    <circle cx="859" cy="634" r="3" fill="#e87aa0" opacity="0.8"/>
</g>

  <!-- right panel -->
  <defs>
    <linearGradient id="turbo" x1="0" y1="0" x2="0" y2="1">
      <stop offset="0" stop-color="#4a8ee8"/>
      <stop offset="0.15" stop-color="#30b0e8"/>
      <stop offset="0.3" stop-color="#28d8c0"/>
      <stop offset="0.45" stop-color="#70ec60"/>
      <stop offset="0.56" stop-color="#b8ee30"/>
      <stop offset="0.68" stop-color="#f0c828"/>
      <stop offset="0.82" stop-color="#f88a22"/>
      <stop offset="1" stop-color="#e0401a"/>
    </linearGradient>
    <linearGradient id="photo2" x1="0" y1="0" x2="0" y2="1">
      <stop offset="0" stop-color="#8e8e8e"/>
      <stop offset="0.35" stop-color="#999"/>
      <stop offset="0.7" stop-color="#8a8a8a"/>
      <stop offset="1" stop-color="#777"/>
    </linearGradient>
    <linearGradient id="photo3" x1="0" y1="0" x2="1" y2="0">
      <stop offset="0" stop-color="#8a8a8a"/>
      <stop offset="0.6" stop-color="#999"/>
      <stop offset="1" stop-color="#a0a0a0"/>
    </linearGradient>
    <filter id="blur2" x="-20%" y="-20%" width="140%" height="140%"><feGaussianBlur stdDeviation="2"/></filter>
    <clipPath id="im2"><rect x="1170" y="478" width="199" height="149"/></clipPath>
    <clipPath id="im3"><rect x="1170" y="646" width="199" height="76"/></clipPath>
  </defs>
  <rect x="1168" y="299" width="208" height="423" fill="#2e343b"/>
  <rect x="1369" y="299" width="7" height="423" fill="#23272b"/>
  <rect x="1373" y="299" width="3" height="204" fill="#70747a"/>
  <!-- image 1 -->
  <rect x="1170" y="311" width="199" height="148" fill="#30133d"/>
  <path d="M1176 341 L1368 341 L1368 423 L1190 423 Z" fill="url(#turbo)"/>
  <path d="M1176 341 L1368 341" stroke="#1d2a6a" stroke-width="1.5"/>
  <path d="M1320 344 L1368 341 L1368 345 Z" fill="#1d2a6a"/>
  <g fill="#2a3050" opacity="0.7"><rect x="1319.7" y="391.0" width="1" height="1"/><rect x="1355.8" y="404.2" width="1" height="1"/><rect x="1352.2" y="400.0" width="1" height="1"/><rect x="1265.9" y="345.2" width="1" height="1"/><rect x="1304.5" y="415.6" width="1" height="1"/><rect x="1210.1" y="412.4" width="1" height="1"/><rect x="1229.3" y="379.1" width="1" height="1"/><rect x="1289.1" y="384.9" width="1" height="1"/><rect x="1219.1" y="344.0" width="1" height="1"/><rect x="1350.6" y="364.5" width="1" height="1"/><rect x="1216.8" y="402.0" width="1" height="1"/><rect x="1213.4" y="404.4" width="1" height="1"/><rect x="1209.2" y="390.5" width="1" height="1"/><rect x="1341.9" y="343.1" width="1" height="1"/><rect x="1220.9" y="359.1" width="1" height="1"/><rect x="1343.7" y="418.6" width="1" height="1"/><rect x="1358.9" y="365.3" width="1" height="1"/><rect x="1307.8" y="384.5" width="1" height="1"/><rect x="1355.1" y="358.8" width="1" height="1"/><rect x="1360.0" y="396.2" width="1" height="1"/><rect x="1242.7" y="411.8" width="1" height="1"/><rect x="1213.4" y="370.8" width="1" height="1"/><rect x="1192.4" y="354.2" width="1" height="1"/><rect x="1293.1" y="366.2" width="1" height="1"/><rect x="1305.6" y="343.3" width="1" height="1"/><rect x="1239.6" y="369.0" width="1" height="1"/><rect x="1274.1" y="406.0" width="1" height="1"/><rect x="1270.8" y="367.3" width="1" height="1"/><rect x="1197.8" y="397.3" width="1" height="1"/><rect x="1195.2" y="418.1" width="1" height="1"/><rect x="1338.4" y="400.7" width="1" height="1"/><rect x="1326.2" y="344.4" width="1" height="1"/><rect x="1288.9" y="371.2" width="1" height="1"/><rect x="1187.2" y="343.7" width="1" height="1"/><rect x="1357.7" y="356.9" width="1" height="1"/><rect x="1320.8" y="358.1" width="1" height="1"/><rect x="1355.8" y="414.6" width="1" height="1"/><rect x="1247.8" y="369.5" width="1" height="1"/><rect x="1325.4" y="383.4" width="1" height="1"/><rect x="1319.1" y="351.3" width="1" height="1"/><rect x="1341.1" y="404.4" width="1" height="1"/><rect x="1355.9" y="345.8" width="1" height="1"/><rect x="1243.1" y="350.0" width="1" height="1"/><rect x="1351.3" y="390.0" width="1" height="1"/><rect x="1352.1" y="369.2" width="1" height="1"/><rect x="1241.9" y="385.0" width="1" height="1"/><rect x="1215.1" y="367.4" width="1" height="1"/><rect x="1207.2" y="349.0" width="1" height="1"/><rect x="1365.4" y="396.1" width="1" height="1"/><rect x="1189.5" y="355.4" width="1" height="1"/><rect x="1284.5" y="419.0" width="1" height="1"/><rect x="1226.9" y="374.3" width="1" height="1"/><rect x="1334.8" y="388.7" width="1" height="1"/><rect x="1261.0" y="378.1" width="1" height="1"/><rect x="1350.3" y="347.3" width="1" height="1"/><rect x="1271.2" y="345.5" width="1" height="1"/><rect x="1212.4" y="407.6" width="1" height="1"/><rect x="1357.1" y="399.3" width="1" height="1"/><rect x="1328.0" y="391.5" width="1" height="1"/><rect x="1260.7" y="351.2" width="1" height="1"/><rect x="1337.2" y="354.5" width="1" height="1"/><rect x="1265.5" y="365.7" width="1" height="1"/><rect x="1340.2" y="419.9" width="1" height="1"/><rect x="1270.5" y="418.2" width="1" height="1"/><rect x="1317.0" y="380.6" width="1" height="1"/><rect x="1237.4" y="379.9" width="1" height="1"/><rect x="1210.4" y="374.1" width="1" height="1"/><rect x="1363.9" y="372.0" width="1" height="1"/><rect x="1300.7" y="416.9" width="1" height="1"/><rect x="1246.2" y="381.4" width="1" height="1"/><rect x="1230.3" y="349.9" width="1" height="1"/><rect x="1342.5" y="403.2" width="1" height="1"/><rect x="1326.9" y="370.8" width="1" height="1"/><rect x="1311.8" y="402.7" width="1" height="1"/><rect x="1323.0" y="394.1" width="1" height="1"/><rect x="1312.0" y="371.0" width="1" height="1"/><rect x="1271.4" y="364.6" width="1" height="1"/><rect x="1311.1" y="402.3" width="1" height="1"/><rect x="1356.0" y="365.6" width="1" height="1"/><rect x="1290.9" y="393.0" width="1" height="1"/><rect x="1281.1" y="343.9" width="1" height="1"/><rect x="1305.5" y="362.3" width="1" height="1"/><rect x="1332.7" y="378.6" width="1" height="1"/><rect x="1329.7" y="392.9" width="1" height="1"/><rect x="1300.8" y="369.8" width="1" height="1"/><rect x="1335.4" y="399.8" width="1" height="1"/><rect x="1337.2" y="370.0" width="1" height="1"/><rect x="1311.1" y="410.0" width="1" height="1"/><rect x="1358.4" y="418.2" width="1" height="1"/><rect x="1280.9" y="382.9" width="1" height="1"/></g>
  <!-- image 2 -->
  <g clip-path="url(#im2)">
    <rect x="1170" y="478" width="199" height="149" fill="url(#photo2)"/>
    <g filter="url(#blur8)">
      <ellipse cx="1270" cy="545" rx="70" ry="35" fill="#a0a0a0"/>
      <ellipse cx="1200" cy="520" rx="30" ry="15" fill="#959595"/>
      <ellipse cx="1260" cy="598" rx="100" ry="8" fill="#6e6e6e"/>
      <ellipse cx="1265" cy="492" rx="110" ry="8" fill="#7c7c7c"/>
    </g>
    <path d="M1170 478 L1369 478 L1369 502 L1343 494 Q1300 483 1260 482 Q1210 482 1170 485 Z" fill="#ececec"/>
    <path d="M1170 578 L1174 576 L1205 614 L1228 627 L1218 627 L1170 588 Z" fill="#454545" opacity="0.7"/>
    <path d="M1170 600 Q1182 603 1187 627 L1170 627 Z" fill="#e6e6e6"/>
    <path d="M1188 606 L1203 594" stroke="#cfcfcf" stroke-width="1"/>
    <path d="M1283 606 Q1290 598 1297 606 L1299 627 L1281 627 Z" fill="#c4c4c4"/>
    <circle cx="1362" cy="628" r="6" fill="#eee"/>
  </g>
  <!-- image 3 -->
  <g clip-path="url(#im3)">
    <rect x="1170" y="646" width="199" height="76" fill="url(#photo3)"/>
    <g filter="url(#blur8)">
      <ellipse cx="1310" cy="690" rx="60" ry="25" fill="#a5a5a5"/>
    </g>
    <path d="M1170 646 L1369 646 L1369 660 Q1330 652 1280 650 Q1220 649 1170 650 Z" fill="#ececec"/>
  </g>
  <!-- toolbar -->
  <rect x="594" y="722" width="782" height="17" fill="#121416"/>
  <line x1="595" y1="722" x2="1303" y2="722" stroke="#dcdcdc" stroke-width="1.5"/>
  <circle cx="1303.5" cy="722" r="3.2" fill="#f0f0f0"/>
  <rect x="605" y="729" width="2.6" height="7.5" fill="#fff"/>
  <rect x="609.6" y="729" width="2.6" height="7.5" fill="#fff"/>
  <rect x="626" y="729" width="7.5" height="7.5" fill="#fff"/>
  <!-- icons right -->
  <g fill="#f2f2f2">
    <path d="M1261.5 727.5 C1256 727.5 1256.5 736.5 1261 737 C1263 737 1262 734.5 1263.5 734.5 C1266 734.5 1267 733 1267 731.5 C1267 729 1264.5 727.5 1261.5 727.5 Z"/>
  </g>
  <g fill="#121416"><circle cx="1259.5" cy="731" r="1"/><circle cx="1262" cy="729.8" r="1"/><circle cx="1264.5" cy="731" r="1"/></g>
  <g transform="translate(1282.6 732.3)">
    <circle r="3.6" fill="#f2f2f2"/>
    <g fill="#f2f2f2"><rect x="-1.3" y="-5.2" width="2.6" height="10.4"/><rect x="-1.3" y="-5.2" width="2.6" height="10.4" transform="rotate(45)"/><rect x="-1.3" y="-5.2" width="2.6" height="10.4" transform="rotate(90)"/><rect x="-1.3" y="-5.2" width="2.6" height="10.4" transform="rotate(135)"/></g>
    <circle r="1.5" fill="#121416"/>
  </g>
  <g stroke="#f2f2f2" stroke-width="1.3" fill="none">
    <path d="M1297 728.5 L1304 728.5 M1297 732 L1303 732 M1297 735.5 L1304 735.5 M1308 729.5 L1305 732 L1308 734.5"/>
  </g>
  <g fill="#f2f2f2">
    <rect x="1315" y="728" width="1.3" height="8"/><rect x="1317.5" y="728" width="1.3" height="8"/><rect x="1320" y="728" width="8" height="8"/>
  </g>
  <path d="M1322 734 L1324 732 L1326 734 Z" fill="#121416"/>
  <path d="M1338 728.5 L1341 727.5 L1345 729 L1348 728 L1348 736 L1345 737 L1341 735.5 L1338 736.5 Z" fill="#f2f2f2"/>
  <path d="M1341 729 L1341 735 M1345 730 L1345 736" stroke="#121416" stroke-width="0.8"/>
  <g stroke="#f2f2f2" stroke-width="1.4" fill="none">
    <path d="M1360 730.5 L1360 728 L1362.5 728 M1366 728 L1368.5 728 L1368.5 730.5 M1368.5 734 L1368.5 736.5 L1366 736.5 M1362.5 736.5 L1360 736.5 L1360 734"/>
  </g>
</svg>
<div class="title" style="left:939.5px;top:267.5px">CASPIAN</div>


<div class="abs" style="left:605.5px;top:310.5px;font-size:8.3px;line-height:10px;color:#fff;text-shadow:0 0 0.4px #fff">costmap LOCKED</div>
<div class="abs" style="left:605.5px;top:335.5px;font-size:8.3px;line-height:10px;color:#fff;text-shadow:0 0 0.4px #fff">heightmap LOCKED</div>
<div class="abs" style="left:1129px;top:335px;font-size:6px;line-height:7px;color:#ddd">LEFT</div>
<pre class="abs mono" style="margin:0;left:603.5px;top:558.8px;font-size:7.43px;line-height:9px;color:#f4f4f4;text-shadow:0 0 0.4px #fff">X                   : -55.54 m
Y                   : -749.41 m
Z                   :  85.52 m

ROLL                : -8.11 deg
PITCH               : -0.10 deg
YAW                 : -130.60 deg

LF_STEER            :  0.00 deg
LR_STEER            :  0.00 deg
LEFT_BOGIE          : -0.52 deg
LEFT_DIFFERENTIAL   :  0.34 deg

RF_STEER            :  0.00 deg
RR_STEER            :  0.00 deg
RIGHT_BOGIE         :  0.29 deg
RIGHT_DIFFERENTIAL  :  0.40 deg</pre>
<div class="abs lbl" style="left:1171px;top:300px">disp_approx_0818663877-07673-1.png</div>
<div class="abs lbl" style="left:1171px;top:467px">VgncRawLeft_0818663877-07673-1.png</div>
<div class="abs lbl" style="left:1171px;top:634px">VgncRawLeft_0818663877-07673-1_rectified.png</div>
<div class="abs tb" style="left:648.5px;color:#fff">818664152.61</div>
<div class="abs tb" style="left:726px;color:#fff;transform:scaleX(0.8)">SCLK</div>
<div class="abs tb" style="left:756.5px;color:#b4b4b4">02:42:23.14&nbsp; / &nbsp;02:59:23.00</div>
<div class="abs tb" style="left:1184px;color:#a0a0a0">Sol 1709 downlink</div>
</body></html>
